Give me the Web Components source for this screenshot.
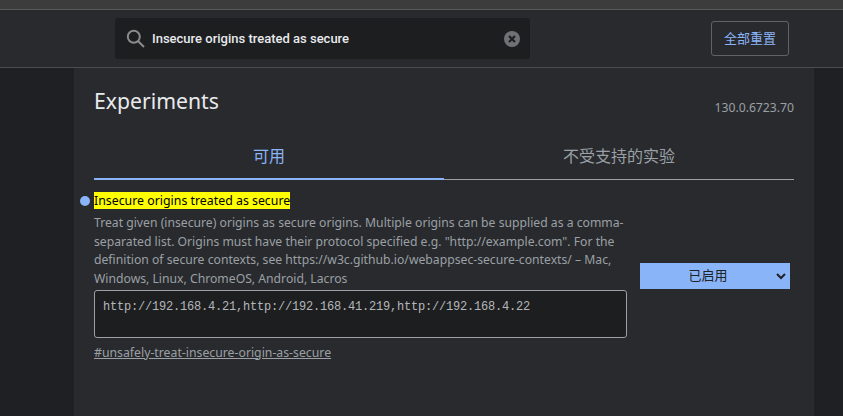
<!DOCTYPE html>
<html lang="zh">
<head>
<meta charset="utf-8">
<title>Experiments</title>
<style>
  html, body { margin: 0; height: 100%; overflow: hidden; background: #1f2023; }
  body { font-family: "Noto Sans", "Noto Sans CJK SC", sans-serif; }
</style>
</head>
<body>
<flags-app></flags-app>

<script>
const FONT = `"Noto Sans", "Noto Sans CJK SC", sans-serif`;

class FlagsSearch extends HTMLElement {
  connectedCallback() {
    this.attachShadow({ mode: 'open' });
    this.shadowRoot.innerHTML = `
      <style>
        :host { display: flex; align-items: center; width: 415px; height: 41px; box-sizing: border-box;
          margin-left: 115px; padding: 0 10px 0 11px; background: #1d1e20; border-radius: 3px; }
        svg { display: block; flex: none; }
        span { flex: 1; margin-left: 7px; color: #e8eaed; font: 500 13px/41px Roboto, sans-serif; }
      </style>
      <svg width="19" height="19" viewBox="0 0 19 19" fill="none" stroke="#8a8b8d" stroke-width="2">
        <circle cx="7.8" cy="7.8" r="6"/><path d="M12.2 12.2 18 18"/>
      </svg>
      <span>Insecure origins treated as secure</span>
      <svg width="16" height="16" viewBox="0 0 16 16">
        <circle cx="8" cy="8" r="8" fill="#707174"/>
        <path d="M5 5l6 6M11 5l-6 6" stroke="#1d1e20" stroke-width="2.2"/>
      </svg>`;
  }
}
customElements.define('flags-search', FlagsSearch);

class FlagsHeader extends HTMLElement {
  connectedCallback() {
    this.attachShadow({ mode: 'open' });
    this.shadowRoot.innerHTML = `
      <style>
        :host { display: flex; align-items: center; justify-content: space-between; height: 59px; box-sizing: border-box;
          padding-right: 54px; background: #292a2d; border-top: 1px solid #58595b; border-bottom: 1px solid #4a4b4d; }
        button { width: 78px; height: 35px; padding: 0; background: transparent; border: 1px solid #5f6368; border-radius: 3px;
          color: #8ab4f8; font: 13px/33px ${FONT}; }
      </style>
      <flags-search></flags-search>
      <button>全部重置</button>`;
  }
}
customElements.define('flags-header', FlagsHeader);

class FlagsTabs extends HTMLElement {
  connectedCallback() {
    this.attachShadow({ mode: 'open' });
    this.shadowRoot.innerHTML = `
      <style>
        :host { display: grid; grid-template-columns: 350px 350px; margin-top: 20px; }
        div { height: 42px; line-height: 38px; text-align: center; font-size: 16px; color: #9aa0a6; border-bottom: 1px solid #9aa0a6; }
        .on { color: #8ab4f8; border-bottom: 2px solid #8ab4f8; height: 41px; }
      </style>
      <div class="on">可用</div>
      <div>不受支持的实验</div>`;
  }
}
customElements.define('flags-tabs', FlagsTabs);

class FlagsExperiment extends HTMLElement {
  connectedCallback() {
    this.attachShadow({ mode: 'open' });
    this.shadowRoot.innerHTML = `
      <style>
        :host { display: flex; justify-content: space-between; align-items: flex-start; margin-top: 12px; position: relative; }
        .dot { position: absolute; left: -14px; top: 4px; width: 10px; height: 10px; border-radius: 50%; background: #8ab4f8; }
        .left { width: 533px; }
        h2 { margin: 0; height: 17px; font: 400 12.35px/17px ${FONT}; color: #000; }
        mark { display: inline-block; background: #ffff00; color: #000; height: 17px; }
        p { margin: 5px 0 0; white-space: nowrap; font-size: 12.2px; line-height: 18.67px; color: #9aa0a6; }
        .box { box-sizing: border-box; height: 48px; margin-top: 1px; padding: 7px 8px; width: 533px; background: #1d1e20;
          border: 1px solid #9aa0a6; border-radius: 3px; color: #b4b7ba; white-space: pre; font: 12px/18px "Liberation Mono", "DejaVu Sans Mono", monospace; letter-spacing: -0.2px; }
        a { display: block; margin-top: 6px; font-size: 12.28px; line-height: 18px; color: #9aa0a6; text-decoration: underline; }
        .select { display: flex; align-items: center; box-sizing: border-box; width: 150px; height: 26px; margin: 71px 4px 0 0;
          background: #8ab4f8; color: #202124; font-size: 13px; padding-right: 4px; }
        .select span { flex: 1; text-align: center; padding-bottom: 3px; }
        .select svg { display: block; }
      </style>
      <span class="dot"></span>
      <div class="left">
        <h2><mark>Insecure origins treated as secure</mark></h2>
        <p>Treat given (insecure) origins as secure origins. Multiple origins can be supplied as a comma-<br>separated list. Origins must have their protocol specified e.g. "http://example.com". For the<br>definition of secure contexts, see https://w3c.github.io/webappsec-secure-contexts/ – Mac,<br>Windows, Linux, ChromeOS, Android, Lacros</p>
        <div class="box">http://192.168.4.21,http://192.168.41.219,http://192.168.4.22</div>
        <a href="#unsafely-treat-insecure-origin-as-secure">#unsafely-treat-insecure-origin-as-secure</a>
      </div>
      <div class="select">
        <span>已启用</span>
        <svg width="10" height="7" viewBox="0 0 10 7" fill="none" stroke="#202124" stroke-width="2"><path d="M1 1l4 4 4-4"/></svg>
      </div>`;
  }
}
customElements.define('flags-experiment', FlagsExperiment);

class FlagsApp extends HTMLElement {
  connectedCallback() {
    this.attachShadow({ mode: 'open' });
    this.shadowRoot.innerHTML = `
      <style>
        :host { display: block; height: 416px; font-family: ${FONT}; }
        .strip { height: 9px; background: #3c3c3c; }
        main { box-sizing: border-box; width: 740px; height: 348px; margin-left: 74px; padding: 0 20px; background: #292a2d; }
        .title { display: flex; justify-content: space-between; align-items: flex-end; padding-top: 17px; }
        h1 { margin: 0; font-weight: 400; font-size: 21.2px; line-height: 32px; color: #e8eaed; }
        .ver { font-size: 12.2px; line-height: 18px; color: #9aa0a6; }
      </style>
      <div class="strip"></div>
      <flags-header></flags-header>
      <main>
        <div class="title"><h1>Experiments</h1><span class="ver">130.0.6723.70</span></div>
        <flags-tabs></flags-tabs>
        <flags-experiment></flags-experiment>
      </main>`;
  }
}
customElements.define('flags-app', FlagsApp);
</script>
</body>
</html>
